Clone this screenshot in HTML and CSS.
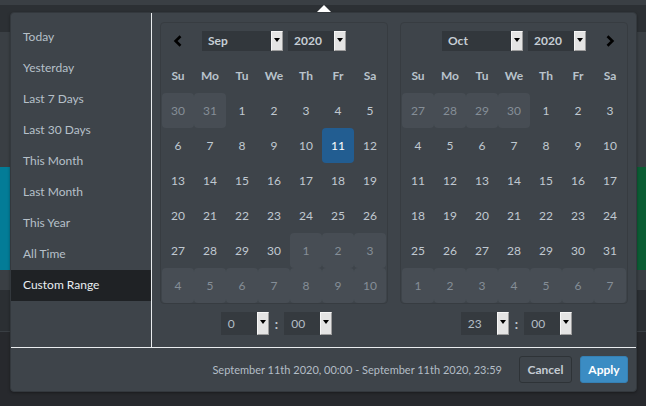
FILE: index.html
```html
<!DOCTYPE html>
<html>
<head>
<meta charset="utf-8">
<link rel="stylesheet" href="styles.css">
</head>
<body>
<div class="page">
  <div class="bg">
    <div class="band b1"></div>
    <div class="band b2"></div>
    <div class="band b3"></div>
    <div class="band b4"><div class="teal"></div><div class="green"></div></div>
    <div class="band b5"></div>
    <div class="band b6"></div>
    <div class="band b7"></div>
    <div class="band b8"></div>
  </div>

  <div class="picker">
    <div class="arrow"></div>
    <div class="main">
      <ul class="ranges">
        <li>Today</li>
        <li>Yesterday</li>
        <li>Last 7 Days</li>
        <li>Last 30 Days</li>
        <li>This Month</li>
        <li>Last Month</li>
        <li>This Year</li>
        <li>All Time</li>
        <li class="active">Custom Range</li>
      </ul>
      <div class="cals">
        <div class="cal">
          <div class="calbox">
            <div class="head">
              <span class="nav"><svg width="10" height="12" viewBox="0 0 10 12"><path d="M7.5 1.2 L2.6 6 L7.5 10.8" fill="none" stroke="#000" stroke-width="2.6"/></svg></span>
              <div class="selects">
                <div class="sel month"><span class="val">Sep</span><span class="btn"></span></div>
                <div class="sel year"><span class="val">2020</span><span class="btn"></span></div>
              </div>
              <span class="nav"></span>
            </div>
            <div class="grid">
              <div class="dow">Su</div><div class="dow">Mo</div><div class="dow">Tu</div><div class="dow">We</div><div class="dow">Th</div><div class="dow">Fr</div><div class="dow">Sa</div>
              <div class="d off">30</div><div class="d off">31</div><div class="d">1</div><div class="d">2</div><div class="d">3</div><div class="d">4</div><div class="d">5</div>
              <div class="d">6</div><div class="d">7</div><div class="d">8</div><div class="d">9</div><div class="d">10</div><div class="d sel-day">11</div><div class="d">12</div>
              <div class="d">13</div><div class="d">14</div><div class="d">15</div><div class="d">16</div><div class="d">17</div><div class="d">18</div><div class="d">19</div>
              <div class="d">20</div><div class="d">21</div><div class="d">22</div><div class="d">23</div><div class="d">24</div><div class="d">25</div><div class="d">26</div>
              <div class="d">27</div><div class="d">28</div><div class="d">29</div><div class="d">30</div><div class="d off">1</div><div class="d off">2</div><div class="d off">3</div>
              <div class="d off">4</div><div class="d off">5</div><div class="d off">6</div><div class="d off">7</div><div class="d off">8</div><div class="d off">9</div><div class="d off">10</div>
            </div>
          </div>
          <div class="time">
            <div class="sel tsel"><span class="val">0</span><span class="btn"></span></div>
            <span class="colon">:</span>
            <div class="sel tsel"><span class="val">00</span><span class="btn"></span></div>
          </div>
        </div>

        <div class="cal">
          <div class="calbox">
            <div class="head">
              <span class="nav"></span>
              <div class="selects">
                <div class="sel month"><span class="val">Oct</span><span class="btn"></span></div>
                <div class="sel year"><span class="val">2020</span><span class="btn"></span></div>
              </div>
              <span class="nav"><svg width="10" height="12" viewBox="0 0 10 12"><path d="M2.5 1.2 L7.4 6 L2.5 10.8" fill="none" stroke="#000" stroke-width="2.6"/></svg></span>
            </div>
            <div class="grid">
              <div class="dow">Su</div><div class="dow">Mo</div><div class="dow">Tu</div><div class="dow">We</div><div class="dow">Th</div><div class="dow">Fr</div><div class="dow">Sa</div>
              <div class="d off">27</div><div class="d off">28</div><div class="d off">29</div><div class="d off">30</div><div class="d">1</div><div class="d">2</div><div class="d">3</div>
              <div class="d">4</div><div class="d">5</div><div class="d">6</div><div class="d">7</div><div class="d">8</div><div class="d">9</div><div class="d">10</div>
              <div class="d">11</div><div class="d">12</div><div class="d">13</div><div class="d">14</div><div class="d">15</div><div class="d">16</div><div class="d">17</div>
              <div class="d">18</div><div class="d">19</div><div class="d">20</div><div class="d">21</div><div class="d">22</div><div class="d">23</div><div class="d">24</div>
              <div class="d">25</div><div class="d">26</div><div class="d">27</div><div class="d">28</div><div class="d">29</div><div class="d">30</div><div class="d">31</div>
              <div class="d off">1</div><div class="d off">2</div><div class="d off">3</div><div class="d off">4</div><div class="d off">5</div><div class="d off">6</div><div class="d off">7</div>
            </div>
          </div>
          <div class="time">
            <div class="sel tsel"><span class="val">23</span><span class="btn"></span></div>
            <span class="colon">:</span>
            <div class="sel tsel"><span class="val">00</span><span class="btn"></span></div>
          </div>
        </div>
      </div>
    </div>
    <div class="foot">
      <span class="range-text">September 11th 2020, 00:00 - September 11th 2020, 23:59</span>
      <button class="b cancel">Cancel</button>
      <button class="b apply">Apply</button>
    </div>
  </div>
</div>
</body>
</html>
```

FILE: styles.css
```css
* { box-sizing: border-box; }
html, body { margin: 0; padding: 0; }
body {
  width: 646px;
  height: 406px;
  overflow: hidden;
  font-family: Lato, "Open Sans", sans-serif;
  background: #26292c;
}
.page { position: relative; width: 646px; height: 406px; }

/* background app behind the popup */
.bg { display: flex; flex-direction: column; width: 646px; height: 406px; }
.band { flex: none; width: 100%; }
.b1 { height: 5px; background: #3a3f44; }
.b2 { height: 27px; background: #2c3034; }
.b3 { height: 135px; background: #3a3f44; }
.b4 { height: 103px; background: #3a3f44; display: flex; justify-content: space-between; }
.teal { width: 12px; background: #037c97; }
.green { width: 12px; background: #0b5e34; }
.b5 { height: 20px; background: #3a3f44; }
.b6 { height: 41px; background: #2b2f33; }
.b7 { height: 1px; background: #393e43; }
.b8 { flex: 1; background: #27292d; }

/* popup */
.picker {
  position: absolute;
  left: 10px;
  top: 12px;
  width: 627px;
  height: 380px;
  background: #3e444a;
  border: 1px solid #33383d;
  border-radius: 4px;
  box-shadow: 0 1px 3px rgba(0,0,0,0.35);
  display: flex;
  flex-direction: column;
}
.arrow {
  position: absolute;
  top: -8px;
  left: 306px;
  width: 0; height: 0;
  border-left: 7px solid transparent;
  border-right: 7px solid transparent;
  border-bottom: 7px solid #ffffff;
}
.main {
  display: flex;
  height: 335px;
  border-bottom: 1px solid #e9ecee;
}
.ranges {
  list-style: none;
  margin: 0;
  padding: 9px 0 0 0;
  width: 141px;
  border-right: 1px solid #e9ecee;
  flex: none;
}
.ranges li {
  height: 31px;
  line-height: 30px;
  padding-bottom: 1px;
  padding-left: 12px;
  font-size: 12px;
  color: #b6c0c9;
}
.ranges li.active { background: #1f2225; color: #e9eef2; }

.cals {
  display: flex;
  gap: 12px;
  padding: 9px 8px 0 8px;
}
.cal { width: 228px; display: flex; flex-direction: column; }
.calbox {
  border: 1px solid #373c41;
  border-radius: 4px;
  padding: 0 1px;
  height: 282px;
}
.head {
  height: 35px;
  display: grid;
  grid-template-columns: 32px 1fr 32px;
  align-items: center;
}
.nav { display: flex; justify-content: center; align-items: center; }
.selects { display: flex; justify-content: center; gap: 5px; }

.sel {
  display: flex;
  height: 20px;
  background: #32373c;
  align-items: center;
}
.sel .val {
  flex: 1;
  padding-left: 6px;
  font-size: 12px;
  font-weight: bold;
  color: #c6ced5;
}
.sel .btn {
  width: 12px;
  height: 100%;
  background: #e4e4e4;
  border-top: 1px solid #f6f6f6;
  border-left: 1px solid #f6f6f6;
  border-right: 1px solid #9c9c9c;
  border-bottom: 1px solid #9c9c9c;
  position: relative;
}
.sel .btn::after {
  content: "";
  position: absolute;
  left: 2px;
  top: 6px;
  border-left: 3px solid transparent;
  border-right: 3px solid transparent;
  border-top: 4px solid #000;
}
.month { width: 81px; }
.year { width: 58px; }

.grid {
  display: grid;
  grid-template-columns: repeat(7, 32px);
  grid-auto-rows: 35px;
}
.dow, .d {
  display: flex;
  align-items: center;
  justify-content: center;
  font-size: 12px;
}
.dow { font-weight: bold; color: #b9c3cc; }
.d { color: #c0c9d1; border-radius: 4px; }
.d.off { background: #474d54; color: #858e97; }
.d.sel-day { background: #225d91; color: #ffffff; }

.time {
  display: flex;
  justify-content: center;
  align-items: center;
  gap: 6px;
  margin-top: 8px;
  padding-left: 5px;
}
.tsel { width: 48px; height: 23px; background: #353a3f; }
.tsel .val { font-weight: normal; color: #b3bdc6; padding-left: 7px; }
.tsel .btn::after { top: 7px; }
.colon { color: #c0c8cf; font-size: 13px; font-weight: bold; }

.foot {
  flex: 1;
  display: flex;
  align-items: center;
  justify-content: flex-end;
  padding-right: 8px;
}
.range-text { font-size: 11px; color: #b3bdc6; margin-right: 17px; }
.b {
  font-family: inherit;
  font-size: 12px;
  font-weight: bold;
  height: 27px;
  border-radius: 3px;
  padding: 0;
  cursor: pointer;
}
.cancel { width: 53px; background: #3e444a; border: 1px solid #2e3337; color: #c4ccd3; margin-right: 8px; }
.apply { width: 48px; background: #3b8cc3; border: 1px solid #3580b4; color: #ffffff; }
```
